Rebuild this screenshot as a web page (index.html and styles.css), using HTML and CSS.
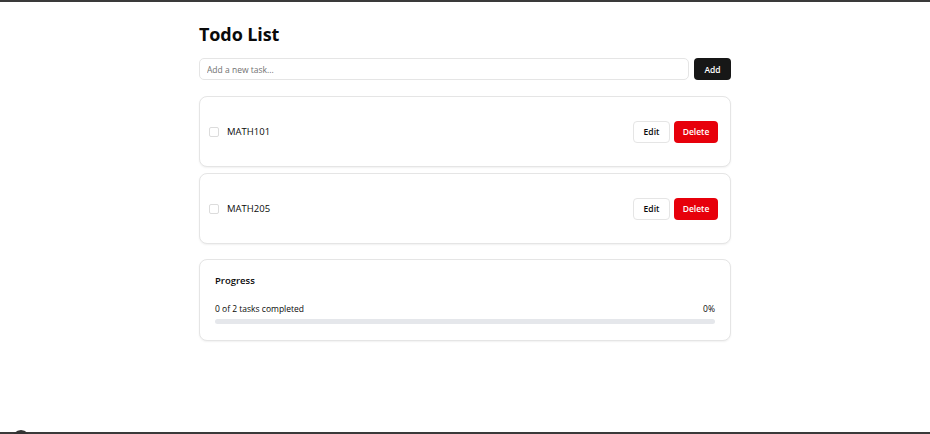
FILE: index.html
```html
<!DOCTYPE html>
<html lang="en">
<head>
<meta charset="utf-8">
<title>Todo List</title>
<link rel="stylesheet" href="styles.css">
</head>
<body>
<div class="topline"></div>
<main class="page">
  <h1 class="title">Todo List</h1>
  <form class="add-row">
    <input class="add-input" type="text" placeholder="Add a new task...">
    <button class="btn btn-dark" type="button">Add</button>
  </form>
  <ul class="todos">
    <li class="card todo">
      <label class="todo-label"><span class="check"></span><span class="todo-text">MATH101</span></label>
      <div class="actions">
        <button class="btn btn-outline" type="button">Edit</button>
        <button class="btn btn-red" type="button">Delete</button>
      </div>
    </li>
    <li class="card todo">
      <label class="todo-label"><span class="check"></span><span class="todo-text">MATH205</span></label>
      <div class="actions">
        <button class="btn btn-outline" type="button">Edit</button>
        <button class="btn btn-red" type="button">Delete</button>
      </div>
    </li>
  </ul>
  <section class="card progress">
    <h2 class="progress-title">Progress</h2>
    <div class="progress-row">
      <span>0 of 2 tasks completed</span>
      <span>0%</span>
    </div>
    <div class="bar"><div class="bar-fill" style="width:0%"></div></div>
  </section>
</main>
<div class="bottomline"></div>
<div class="dev-dot"></div>
</body>
</html>
```
FILE: styles.css
```css
* { box-sizing: border-box; }
html, body { margin: 0; padding: 0; height: 100%; }
body {
  font-family: "Open Sans", "Noto Sans", Arial, sans-serif;
  color: #0a0a0a;
  background: #fff;
  position: relative;
  overflow: hidden;
}
.topline { height: 2px; background: #3a3a3a; }
.bottomline {
  position: absolute; left: 0; right: 0; bottom: 0;
  height: 2px; background: #3a3a3a;
}
.dev-dot {
  position: absolute; left: 12px; bottom: -14px;
  width: 18px; height: 18px; border-radius: 50%;
  background: #333;
}
.page {
  width: 532px;
  margin: 0 auto;
  padding-top: 20px;
}
.title {
  margin: 0;
  font-size: 18px;
  font-weight: 700;
  line-height: 24px;
  letter-spacing: -0.1px;
}
.add-row {
  display: flex;
  gap: 5px;
  margin: 12px 0 16px;
}
.add-input {
  flex: 1;
  height: 22px;
  border: 1px solid #e5e5e5;
  border-radius: 5px;
  padding: 0 7px;
  font: 8.5px "Open Sans", sans-serif;
  color: #0a0a0a;
  outline: none;
}
.add-input::placeholder { color: #717171; }
.btn {
  height: 22px;
  border-radius: 4px;
  font: 600 8.5px "Open Sans", sans-serif;
  padding: 0 10px;
  border: 1px solid transparent;
  cursor: pointer;
}
.btn-dark { background: #171717; color: #fff; width: 37px; padding: 0; }
.btn-outline { background: #fff; border-color: #e5e5e5; color: #0a0a0a; width: 37px; padding: 0; }
.btn-red { background: #e7000b; color: #fff; width: 44px; padding: 0; }
.todos {
  list-style: none;
  margin: 0;
  padding: 0;
  display: flex;
  flex-direction: column;
  gap: 6px;
}
.card {
  border: 1px solid #e5e5e5;
  border-radius: 8px;
  background: #fff;
  box-shadow: 0 1px 2px rgba(0,0,0,0.06);
}
.todo {
  height: 71px;
  display: flex;
  align-items: center;
  justify-content: space-between;
  padding: 0 12px 0 9px;
}
.todo-label { display: flex; align-items: center; gap: 8px; }
.check {
  width: 10px; height: 10px;
  border: 1px solid #dcdcdc;
  border-radius: 2px;
  background: #fff;
}
.todo-text { font-size: 9.5px; color: #0a0a0a; }
.actions { display: flex; gap: 4px; }
.progress {
  margin-top: 15px;
  height: 82px;
  padding: 14px 15px 0;
}
.progress-title {
  margin: 0;
  font-size: 9.5px;
  font-weight: 600;
  line-height: 14px;
}
.progress-row {
  display: flex;
  justify-content: space-between;
  margin-top: 15px;
  font-size: 8.5px;
  line-height: 12px;
}
.bar {
  margin-top: 4px;
  height: 5px;
  border-radius: 3px;
  background: #e5e7eb;
  overflow: hidden;
}
.bar-fill { height: 100%; background: #171717; }
```
